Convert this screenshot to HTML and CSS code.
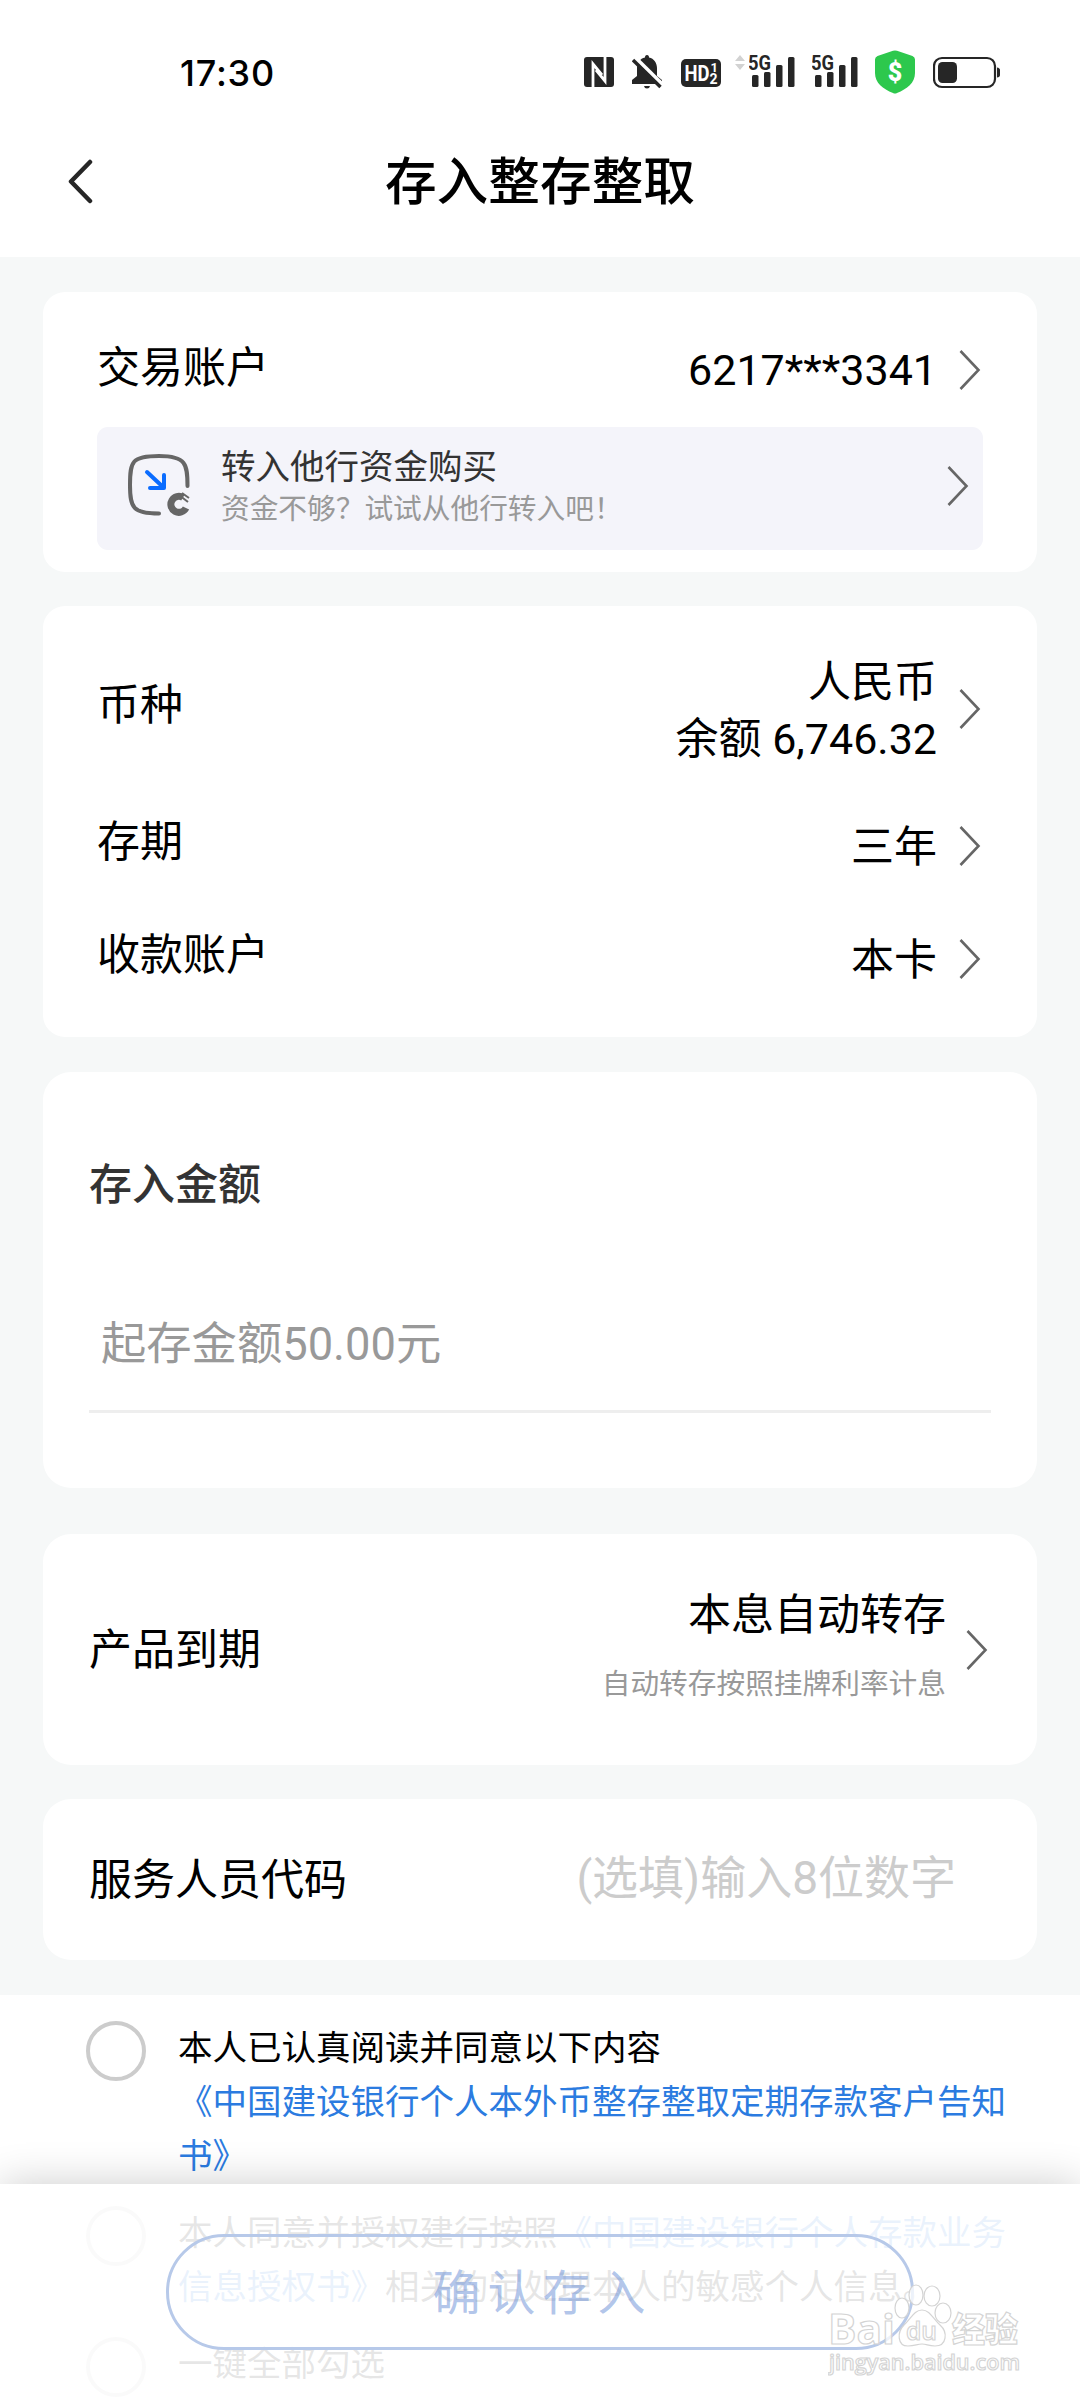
FILE: index.html
```html
<!DOCTYPE html>
<html lang="zh-CN">

<head>
    <meta charset="UTF-8">
    <meta name="viewport" content="width=device-width, initial-scale=1.0">
    <title>存入整存整取</title>
    <link rel="stylesheet" href="styles.css">
</head>

<body>
    <svg class="symbols" width="0" height="0">
        <symbol id="arrow" viewBox="0 0 22 40">
            <path d="M1.5 1 L19.5 20 L1.5 39" fill="none" stroke="#666" stroke-width="2.6" />
        </symbol>
    </svg>

    <header class="header">
        <div class="status-bar">
            <span class="time">17:30</span>
            <div class="status-icons">
                <!-- NFC -->
                <svg class="icon-nfc" viewBox="0 0 30 44">
                    <rect y="7" width="30" height="30" rx="3" fill="#262626" />
                    <path d="M9 37 V14 L18 25 M21 7 V31 L12 20" fill="none" stroke="#fff" stroke-width="2.8" />
                </svg>
                <!-- Wyciszony dzwonek -->
                <svg class="icon-bell" viewBox="0 0 30 44">
                    <path d="M15 5 C16.5 5 17 6 17 7.5 C22 8.5 25 13 25 18 V26 L30 30 V34 H0 V30 L5 26 V18 C5 13 8 8.5 13 7.5 C13 6 13.5 5 15 5 Z" fill="#262626" />
                    <path d="M12 36 H18 Q17.5 38.5 15 38.5 Q12.5 38.5 12 36 Z" fill="#262626" />
                    <path d="M4 8.5 L31 35" stroke="#fff" stroke-width="4" />
                    <path d="M1 10 L28.5 37" stroke="#262626" stroke-width="3.4" />
                </svg>
                <!-- HD -->
                <svg class="icon-hd" viewBox="0 0 40 44">
                    <rect y="9" width="40" height="28" rx="5" fill="#262626" />
                    <text x="3.5" y="31" font-family="Roboto" font-weight="700" font-size="22" textLength="25" lengthAdjust="spacingAndGlyphs" fill="#fff">HD</text>
                    <text x="29.5" y="22" font-family="Roboto" font-weight="700" font-size="13" fill="#fff">1</text>
                    <text x="28.5" y="34" font-family="Roboto" font-weight="700" font-size="14" fill="#fff">2</text>
                </svg>
                <svg class="icon-updown" viewBox="0 0 10 44">
                    <path d="M0 11 L5 5 L10 11 Z M0 14 L5 20 L10 14 Z" fill="#d2d2d2" />
                </svg>
                <!-- SIM 1 -->
                <svg class="icon-signal" viewBox="0 0 46 44" fill="#262626">
                    <text x="-1" y="20" font-family="Roboto" font-weight="700" font-size="21" textLength="23" lengthAdjust="spacingAndGlyphs">5G</text>
                    <rect x="3" y="25" width="6.5" height="12" rx="1.5" />
                    <rect x="15" y="22" width="6.5" height="15" rx="1.5" />
                    <rect x="27" y="15" width="6.5" height="22" rx="1.5" />
                    <rect x="39" y="7" width="6.5" height="30" rx="1.5" />
                </svg>
                <!-- SIM 2 -->
                <svg class="icon-signal" viewBox="0 0 46 44" fill="#262626">
                    <text x="-1" y="20" font-family="Roboto" font-weight="700" font-size="21" textLength="23" lengthAdjust="spacingAndGlyphs">5G</text>
                    <rect x="3" y="25" width="6.5" height="12" rx="1.5" />
                    <rect x="15" y="22" width="6.5" height="15" rx="1.5" />
                    <rect x="27" y="15" width="6.5" height="22" rx="1.5" />
                    <rect x="39" y="7" width="6.5" height="30" rx="1.5" />
                </svg>
                <svg class="icon-shield" viewBox="0 0 40 44">
                    <path d="M18 .8 Q20 0 22 .8 L37.5 6 Q40 7 40 9.5 V23 C40 33 32 39 22 43 Q20 44 18 43 C8 39 0 33 0 23 V9.5 Q0 7 2.5 6 Z" fill="#2dc84d" />
                    <text x="20" y="31" font-family="Roboto" font-weight="900" font-size="25" text-anchor="middle" fill="#fff">$</text>
                </svg>
                <svg class="icon-battery" viewBox="0 0 67 44">
                    <rect x="1" y="8" width="61" height="29" rx="8" fill="none" stroke="#262626" stroke-width="2.2" />
                    <rect x="5" y="12" width="19" height="21" rx="4.5" fill="#262626" />
                    <path d="M64 17.5 Q67 18 67 20 V25 Q67 27 64 27.5 Z" fill="#262626" />
                </svg>
            </div>
        </div>
        <div class="title-bar">
            <svg class="back" viewBox="0 0 26 46">
                <path d="M23 3 L4 22.5 L23 42" fill="none" stroke="#262626" stroke-width="4.5" stroke-linecap="round" stroke-linejoin="round" />
            </svg>
            <h1>存入整存整取</h1>
        </div>
    </header>

    <main class="form">
        <section class="card account-card">
            <div class="row">
                <span class="label">交易账户</span>
                <span class="value number">6217***3341</span>
                <svg class="arrow"><use href="#arrow" /></svg>
            </div>
            <div class="transfer">
                <svg class="transfer-icon" viewBox="0 0 62 62">
                    <path d="M59.5 32 C59.5 10 58 2 31 2 C4 2 2 7 2 31 C2 54 5 59.5 31 59.5" fill="none" stroke="#666" stroke-width="4" stroke-linecap="round" />
                    <path d="M19 18 L35 33 M22 34 H36 V21" fill="none" stroke="#0a6cff" stroke-width="4" stroke-linecap="round" stroke-linejoin="round" />
                    <path d="M55 43.5 A8 8 0 1 0 58 54" fill="none" stroke="#666" stroke-width="7" />
                    <path d="M51 41 L60 48 M54 39 L61 44" stroke="#666" stroke-width="2" />
                </svg>
                <div class="transfer-text">
                    <p class="transfer-title">转入他行资金购买</p>
                    <p class="hint">资金不够？试试从他行转入吧！</p>
                </div>
                <svg class="arrow"><use href="#arrow" /></svg>
            </div>
        </section>

        <section class="card detail-card">
            <div class="row row-tall">
                <span class="label">币种</span>
                <span class="value">人民币<br>余额 6,746.32</span>
                <svg class="arrow"><use href="#arrow" /></svg>
            </div>
            <div class="row">
                <span class="label">存期</span>
                <span class="value">三年</span>
                <svg class="arrow"><use href="#arrow" /></svg>
            </div>
            <div class="row">
                <span class="label">收款账户</span>
                <span class="value">本卡</span>
                <svg class="arrow"><use href="#arrow" /></svg>
            </div>
        </section>

        <section class="card amount-card">
            <h2>存入金额</h2>
            <div class="amount-input">起存金额50.00元</div>
        </section>

        <section class="card expire-card">
            <span class="label">产品到期</span>
            <div class="expire-value">
                <p class="expire-title">本息自动转存</p>
                <p class="hint">自动转存按照挂牌利率计息</p>
            </div>
            <svg class="arrow"><use href="#arrow" /></svg>
        </section>

        <section class="card staff-card">
            <span class="label">服务人员代码</span>
            <span class="staff-input">(选填)输入8位数字</span>
        </section>
    </main>

    <section class="agreements">
        <div class="agreement first">
            <span class="radio"></span>
            <p>本人已认真阅读并同意以下内容<br><a>《中国建设银行个人本外币整存整取定期存款客户告知书》</a></p>
        </div>
        <div class="agreement second">
            <span class="radio"></span>
            <p>本人同意并授权建行按照<a>《中国建设银行个人存款业务信息授权书》</a>相关约定处理本人的敏感个人信息。</p>
        </div>
        <div class="agreement">
            <span class="radio"></span>
            <p>一键全部勾选</p>
        </div>
    </section>

    <footer class="footer">
        <button class="submit">确认存入</button>
    </footer>

    <!-- Znak wodny -->
    <svg class="watermark" viewBox="0 0 200 96">
        <g fill="#fff" fill-opacity=".75" stroke="#d4d4d4" stroke-width="1.2">
            <ellipse cx="74" cy="27" rx="7" ry="10" />
            <ellipse cx="88" cy="14" rx="7" ry="10" />
            <ellipse cx="104" cy="15" rx="8" ry="10" />
            <ellipse cx="115" cy="32" rx="8" ry="10" />
            <path d="M94 29 C102 29 105 38 112 44 C120 51 119 65 107 65 C100 65 99 63 94 63 C89 63 87 65 80 65 C69 65 69 51 76 44 C83 38 86 29 94 29 Z" />
            <text x="0" y="63" font-family="Open Sans" font-weight="700" font-size="42" textLength="67" lengthAdjust="spacingAndGlyphs">Bai</text>
            <text x="78" y="59" font-family="Open Sans" font-weight="600" font-size="26" textLength="31" lengthAdjust="spacingAndGlyphs">du</text>
            <text x="124" y="61" font-family="Noto Sans CJK SC" font-weight="900" font-size="34" textLength="66" lengthAdjust="spacingAndGlyphs">经验</text>
            <text x="1" y="89" font-family="Open Sans" font-weight="600" font-size="22" textLength="191" lengthAdjust="spacingAndGlyphs">jingyan.baidu.com</text>
        </g>
    </svg>
</body>

</html>
```
FILE: styles.css
```css
* {
    box-sizing: border-box;
}

body {
    margin: 0;
    width: 1080px;
    height: 2400px;
    position: relative;
    overflow: hidden;
    background-color: #f6f8f8;
    font-family: Roboto, "Noto Sans CJK SC", sans-serif;
    font-size: 43px;
    line-height: 57px;
    color: #000;
}

h1,
h2,
p {
    margin: 0;
}

svg {
    display: block;
    flex-shrink: 0;
}

.symbols {
    position: absolute;
}

.header {
    height: 257px;
    background-color: #fff;
}

.status-bar {
    display: flex;
    justify-content: space-between;
    align-items: flex-start;
    height: 120px;
    padding: 50px 80px 0 180px;
}

.time {
    font-family: Inter, sans-serif;
    font-size: 36px;
    font-weight: 500;
    line-height: 46px;
    letter-spacing: 0.8px;
}

.status-icons {
    display: flex;
}

.status-icons svg {
    height: 44px;
}

.icon-nfc {
    width: 30px;
    margin-right: 18px;
}

.icon-bell {
    width: 30px;
    margin-right: 19px;
}

.icon-hd {
    width: 40px;
    margin-right: 14px;
}

.icon-updown {
    width: 10px;
    margin-right: 4px;
}

.icon-signal {
    width: 46px;
    margin-right: 17px;
}

.icon-shield {
    width: 40px;
    margin-right: 18px;
}

.icon-battery {
    width: 67px;
}

.title-bar {
    display: flex;
    align-items: center;
    height: 124px;
    padding: 0 66px 0 67px;
}

.back {
    width: 26px;
    height: 46px;
}

h1 {
    flex: 1;
    margin-right: 27px;
    text-align: center;
    font-size: 51.7px;
    font-weight: 500;
}

.form {
    height: 1738px;
    padding: 35px 43px 0;
}

.card {
    background-color: #fff;
    border-radius: 28px;
}

.row {
    display: flex;
    align-items: center;
    height: 113px;
    padding: 0 2px 0 0;
}

.row .label {
    padding-bottom: 6px;
}

.value {
    margin-left: auto;
    padding-top: 4px;
    text-align: right;
}

.value.number {
    padding-top: 0;
}

.arrow {
    width: 22px;
    height: 40px;
}

.row .arrow {
    margin-left: 22px;
}

.account-card {
    height: 280px;
    margin-bottom: 34px;
    padding: 21px 54px 0;
    border-radius: 22px;
}

.account-card .row {
    height: 114px;
}

.account-card .label {
    padding-bottom: 4px;
}

.transfer {
    display: flex;
    align-items: center;
    height: 123px;
    padding: 0 14px 6px 31px;
    border-radius: 11px;
    background-color: #f4f4fa;
}

.transfer-icon {
    width: 62px;
    height: 62px;
    margin-right: 31px;
    margin-bottom: 2px;
}

.transfer-text {
    flex: 1;
    padding-top: 2px;
}

.transfer-title {
    font-size: 34.5px;
    line-height: 44px;
    color: #333;
}

.hint {
    font-size: 28.7px;
    line-height: 40px;
    color: #999;
}

.detail-card {
    height: 431px;
    margin-bottom: 35px;
    padding: 22px 54px;
    border-radius: 22px;
}

.row-tall {
    height: 161px;
}

.amount-card {
    height: 416px;
    margin-bottom: 46px;
    padding: 85px 46px 0;
}

h2 {
    font-size: 43px;
    font-weight: 500;
    color: #333;
}

.amount-input {
    height: 127px;
    margin-top: 72px;
    padding: 30px 12px 0;
    border-bottom: 3px solid #eee;
    font-size: 45.3px;
    color: #999;
}

.expire-card {
    display: flex;
    align-items: center;
    height: 231px;
    margin-bottom: 34px;
    padding: 0 49px 0 46px;
}

.expire-card .label {
    padding-top: 2px;
}

.expire-value {
    margin-left: auto;
    margin-right: 20px;
    padding-bottom: 9px;
    text-align: right;
}

.expire-title {
    margin-bottom: 20px;
}

.staff-card {
    display: flex;
    align-items: center;
    justify-content: space-between;
    height: 161px;
    padding: 0 81px 0 46px;
}

.staff-card .label {
    padding-top: 2px;
}

.staff-input {
    padding-bottom: 3px;
    font-size: 46px;
    color: #ccc;
}

.agreements {
    height: 405px;
    padding: 26px 70px 0 86px;
    background-color: #fff;
    font-size: 34.5px;
    line-height: 54px;
}

.agreement {
    display: flex;
    gap: 32px;
}

.agreement p {
    width: 830px;
    flex-shrink: 0;
}

.agreement a {
    color: #2b7be0;
}

.first {
    height: 185px;
}

.second {
    height: 131px;
}

.radio {
    width: 60px;
    height: 60px;
    flex-shrink: 0;
    border: 4px solid #ccc;
    border-radius: 50%;
}

.footer {
    position: absolute;
    left: 0;
    bottom: 0;
    width: 100%;
    height: 216px;
    padding-top: 50px;
    background-color: rgba(255, 255, 255, 0.9);
    box-shadow: 0 0 40px rgba(0, 0, 0, 0.2);
}

.submit {
    display: block;
    width: 748px;
    height: 116px;
    margin: 0 auto;
    padding: 0 0 7px 5px;
    border: 3px solid #b7c9e9;
    border-radius: 58px;
    background: none;
    font-family: inherit;
    font-size: 48px;
    letter-spacing: 7px;
    color: rgba(112, 148, 216, 0.55);
}

.watermark {
    position: absolute;
    left: 828px;
    top: 2281px;
    width: 200px;
    height: 96px;
}
```
